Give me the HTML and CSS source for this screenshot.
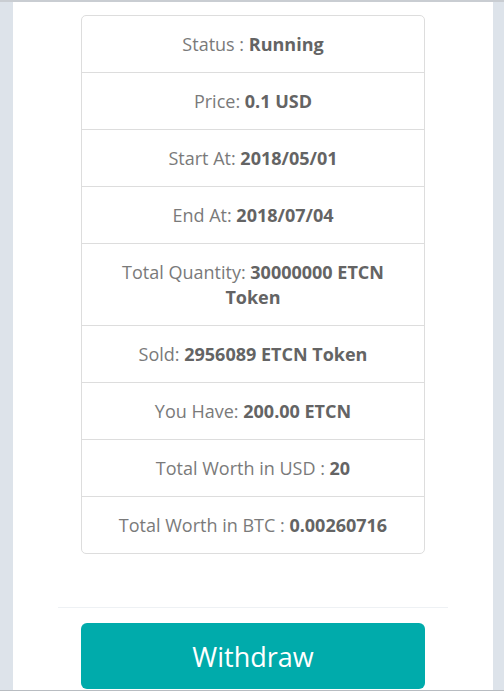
FILE: index.html
```html
<!DOCTYPE html>
<html lang="en">
<head>
  <meta charset="UTF-8">
  <meta name="viewport" content="width=device-width, initial-scale=1.0">
  <title>ICO Details</title>
  <link rel="stylesheet" href="styles.css">
</head>
<body>
  <div class="screen">
    <div class="panel">
      <ul class="details">
        <li>Status : <b>Running</b></li>
        <li>Price: <b>0.1 USD</b></li>
        <li>Start At: <b>2018/05/01</b></li>
        <li>End At: <b>2018/07/04</b></li>
        <li>Total Quantity: <b>30000000 ETCN Token</b></li>
        <li>Sold: <b>2956089 ETCN Token</b></li>
        <li>You Have: <b>200.00 ETCN</b></li>
        <li>Total Worth in USD : <b>20</b></li>
        <li>Total Worth in BTC : <b>0.00260716</b></li>
      </ul>
      <hr class="divider">
      <button class="withdraw">Withdraw</button>
    </div>
  </div>
</body>
</html>
```

FILE: styles.css
```css
/* General Styling */
html, body {
  margin: 0;
  height: 100%;
}

body {
  font-family: "Open Sans", Arial, sans-serif;
  background-color: #dde3ea;
  color: #7a7a7a;
  overflow: hidden;
}

.screen {
  height: 691px;
  border-top: 2px solid #c9cdd2;
  border-bottom: 1px solid #b8bcc1;
  box-sizing: border-box;
  overflow: hidden;
}

.panel {
  margin: 0 11px 0 13px;
  height: 100%;
  background-color: #fff;
  padding-top: 13px;
  box-sizing: border-box;
}

.details {
  list-style: none;
  width: 344px;
  margin: 0 auto;
  padding: 0;
  border: 1px solid #ddd;
  border-radius: 5px;
  box-sizing: border-box;
}

.details li {
  padding: 16px 18px 15px;
  font-size: 18px;
  line-height: 25px;
  text-align: center;
  border-top: 1px solid #ddd;
}

.details li:first-child {
  border-top: none;
}

.details b {
  color: #646464;
  font-weight: 700;
}

.divider {
  width: 390px;
  margin: 53px auto 15px;
  border: none;
  border-top: 1px solid #eef1f4;
}

.withdraw {
  display: block;
  width: 344px;
  height: 66px;
  margin: 0 auto;
  font-family: "Open Sans", Arial, sans-serif;
  font-size: 27px;
  color: #fff;
  background-color: #00abab;
  border: none;
  border-radius: 6px;
  cursor: pointer;
}
```
